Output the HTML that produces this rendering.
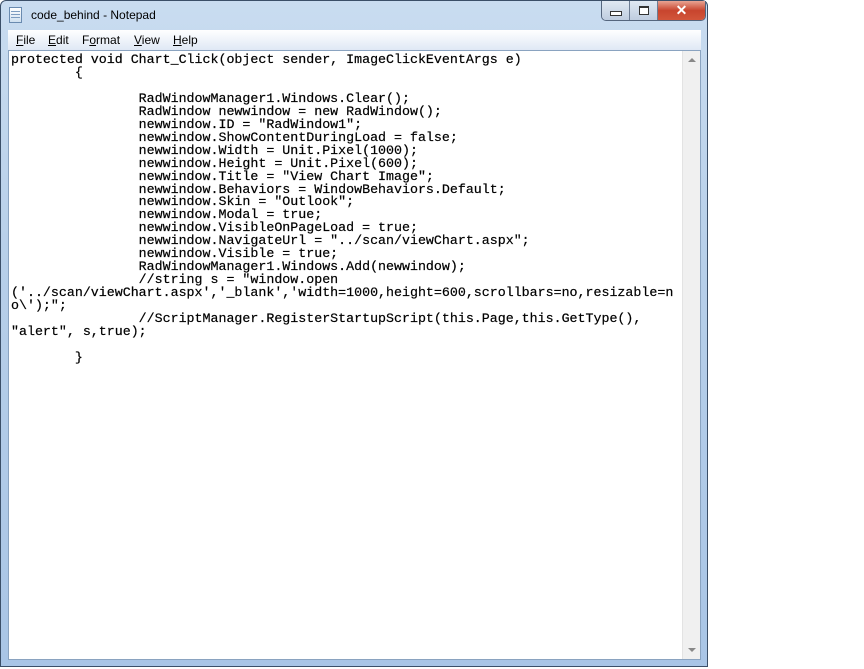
<!DOCTYPE html>
<html><head><meta charset="utf-8"><style>
body{margin:0;width:864px;height:669px;background:#fff;position:relative;overflow:hidden;font-family:"Liberation Sans",sans-serif}
.win{position:absolute;left:0;top:0;width:708px;height:667px;background:linear-gradient(#c9dcf0,#b7cfe9 40%,#a9c5e6);border:1px solid #3b4f68;border-radius:6px 6px 0 0;box-sizing:border-box}
.title{position:absolute;left:30px;top:7px;font-size:12px;color:#000}
.icon{position:absolute;left:8px;top:6px;width:13px;height:16px;background:linear-gradient(#fff,#cfe0f0);border:1px solid #6a8bb0;box-sizing:border-box}
.icon:before{content:"";position:absolute;left:1px;right:1px;top:3px;height:8px;background:repeating-linear-gradient(#7d9cc0 0 1px,transparent 1px 3px)}
.btns{position:absolute;left:600px;top:0;height:19px;display:flex;border:1px solid #55667e;border-top:none;border-radius:0 0 5px 5px;overflow:hidden}
.b{width:27px;height:19px;background:linear-gradient(#e0e9f3,#bfcde0);border-right:1px solid #6c7c93;position:relative}
.x{width:47px;background:linear-gradient(#e8a493,#c8452e 50%,#d2553a);border:none;color:#fff;font-weight:bold;font-size:14px;text-align:center;line-height:18px}
.menu{position:absolute;left:7px;top:29px;width:693px;height:20px;background:linear-gradient(#fff,#dfe8f5);font-size:12px}
.menu span{position:absolute;top:3px}
.edit{position:absolute;left:7px;top:49px;width:693px;height:610px;background:#fff;border:1px solid #8aa3c0;box-sizing:border-box}
pre{position:absolute;left:2px;top:3px;margin:0;font-family:"Liberation Mono",monospace;font-size:13.3px;line-height:12.95px;color:#000;-webkit-text-stroke:0.2px #000}
.sb{position:absolute;right:0;top:0;width:17px;height:100%;background:#f0f0f0;border-left:1px solid #e3e3e3}
.ar{position:absolute;left:5px;width:0;height:0;border-left:4px solid transparent;border-right:4px solid transparent}
</style></head><body>
<div class="win">
<div class="icon"></div>
<div class="title">code_behind - Notepad</div>
<div class="btns"><div class="b"><div style="position:absolute;left:8px;top:10px;width:10px;height:3px;border:1px solid #333;background:#fff"></div></div><div class="b"><div style="position:absolute;left:9px;top:5px;width:8px;height:6px;border:1px solid #333;border-top-width:2px;background:#fff"></div></div><div class="b x">✕</div></div>
<div class="menu"><span style="left:8px"><u>F</u>ile</span><span style="left:40px"><u>E</u>dit</span><span style="left:74px">F<u>o</u>rmat</span><span style="left:126px"><u>V</u>iew</span><span style="left:165px"><u>H</u>elp</span></div>
<div class="edit">
<pre>protected void Chart_Click(object sender, ImageClickEventArgs e)
        {

                RadWindowManager1.Windows.Clear();
                RadWindow newwindow = new RadWindow();
                newwindow.ID = "RadWindow1";
                newwindow.ShowContentDuringLoad = false;
                newwindow.Width = Unit.Pixel(1000);
                newwindow.Height = Unit.Pixel(600);
                newwindow.Title = "View Chart Image";
                newwindow.Behaviors = WindowBehaviors.Default;
                newwindow.Skin = "Outlook";
                newwindow.Modal = true;
                newwindow.VisibleOnPageLoad = true;
                newwindow.NavigateUrl = "../scan/viewChart.aspx";
                newwindow.Visible = true;
                RadWindowManager1.Windows.Add(newwindow);
                //string s = "window.open
('../scan/viewChart.aspx','_blank','width=1000,height=600,scrollbars=no,resizable=n
o\');";
                //ScriptManager.RegisterStartupScript(this.Page,this.GetType(),
"alert", s,true);

        }</pre>
<div class="sb"><div class="ar" style="top:7px;border-bottom:4px solid #888"></div><div class="ar" style="bottom:7px;border-top:4px solid #888"></div></div>
</div>
</div>
</body></html>
